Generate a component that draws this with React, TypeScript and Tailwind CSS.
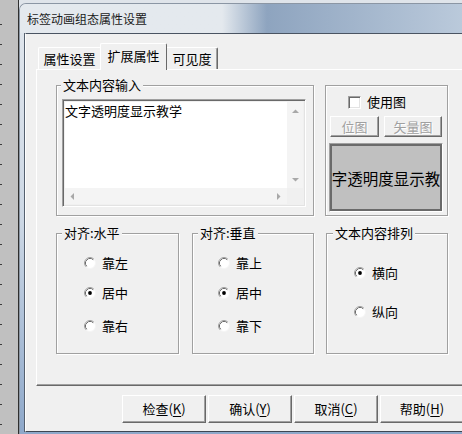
import React from 'react';

const FONT = "font-['Noto_Sans_CJK_SC','Liberation_Sans',sans-serif]";

const Radio = ({ checked = false }: { checked?: boolean }) => (
  <svg width="12" height="12" viewBox="0 0 12 12" className="shrink-0">
    <circle cx="6" cy="6" r="5.5" fill="#fff" stroke="#f4f4f4" />
    <path d="M2.11 9.89 A5.5 5.5 0 0 1 9.89 2.11" fill="none" stroke="#a0a0a0" />
    <path d="M2.82 9.18 A4.5 4.5 0 0 1 9.18 2.82" fill="none" stroke="#696969" />
    <circle cx="6" cy="6" r="3.8" fill="#fff" />
    {checked && <circle cx="6" cy="6" r="1.9" fill="#000" />}
  </svg>
);

const RadioRow = ({ label, checked, className }: { label: string; checked?: boolean; className: string }) => (
  <div className={`flex items-center gap-[6px] h-[16px] ${className}`}>
    <Radio checked={checked} />
    <span className="text-[13px] leading-[16px] text-black">{label}</span>
  </div>
);

const GroupTitle = ({ children, className = '' }: { children: React.ReactNode; className?: string }) => (
  <div className={`-mt-[9px] w-fit px-[2px] h-[16px] bg-[#f0f0f0] text-[13px] leading-[16px] text-black ${className}`}>
    {children}
  </div>
);

const Arrow = ({ dir }: { dir: 'up' | 'down' | 'left' | 'right' }) => {
  const pts = {
    up: '0,4 7,4 3.5,0.5',
    down: '0,0 7,0 3.5,3.5',
    left: '4,0 4,7 0.5,3.5',
    right: '0,0 0,7 3.5,3.5',
  }[dir];
  const horizontal = dir === 'left' || dir === 'right';
  return (
    <svg width={horizontal ? 4 : 7} height={horizontal ? 7 : 4}>
      <polygon points={pts} fill="#a8a8a8" />
    </svg>
  );
};

const DialogButton = ({ text, hot }: { text: string; hot: string }) => (
  <button className="w-[84px] h-[28px] bg-[#f0f0f0] border border-t-white border-l-white border-r-[#696969] border-b-[#696969] shadow-[inset_-1px_-1px_0_#a0a0a0] text-[13px] leading-[16px] text-black flex items-center justify-center">
    {text}(<span className="underline underline-offset-2">{hot}</span>)
  </button>
);

const SmallButton = ({ text, width }: { text: string; width: string }) => (
  <div className={`${width} h-[21px] bg-[#f0f0f0] border border-t-white border-l-white border-r-[#696969] border-b-[#696969] shadow-[inset_-1px_-1px_0_#a0a0a0] text-[13px] leading-[16px] text-[#a0a0a0] [text-shadow:1px_1px_0_#fff] flex items-center justify-center`}>
    {text}
  </div>
);

export default function App() {
  return (
    <div className={`w-[462px] h-[434px] overflow-hidden flex bg-[#dfe4ea] ${FONT}`}>
      {/* desktop strip on the left */}
      <div className="w-[19px] h-full shrink-0 bg-[#c0c0c0] border-r border-[#2f2f2f] flex flex-col pt-[24px] gap-[19px]">
        {Array.from({ length: 21 }).map((_, i) => (
          <div key={i} className="w-[2px] h-[1px] bg-[#3c3c3c]" />
        ))}
      </div>

      {/* dialog window */}
      <div className="w-[450px] shrink-0 mt-[3px] flex flex-col rounded-tl-[7px] border-l border-t border-[#8b96a4] bg-linear-to-b from-[#e2e7ed] via-[#cdd8e5] to-[#8ea8ca] overflow-hidden">
        <div className="h-[29px] shrink-0 flex items-center pl-[7px] bg-linear-to-r from-[#e4e9ee] from-45% via-[#8ea4bf] via-55% to-[#bccbdc]">
          <span className="text-[12px] leading-[16px] text-[#1a1a1a]">标签动画组态属性设置</span>
        </div>

        <div className="flex h-[399px] shrink-0">
          <div className="w-[5px] shrink-0 border-r border-[#55606e]" />
          <div className="flex-1 flex flex-col bg-[#f0f0f0] border-l border-white border-t border-t-[#4a5462] border-b border-b-[#3e4652] pt-[9px]">
            {/* tabs */}
            <div className="flex items-end h-[26px] ml-[12px]">
              <div className="w-[62px] h-[22px] border-l border-t border-white rounded-tl-[2px] flex items-center justify-center text-[13px] leading-[16px] text-black">
                属性设置
              </div>
              <div className="relative z-10 w-[67px] h-[27px] -mb-[1px] bg-[#f0f0f0] border-l border-t border-white border-r border-r-[#696969] rounded-t-[2px] flex items-start justify-center pt-[4px] text-[13px] leading-[16px] text-black">
                扩展属性
              </div>
              <div className="w-[51px] h-[22px] border-t border-white border-r border-r-[#696969] shadow-[inset_-1px_0_0_#a0a0a0] rounded-tr-[2px] flex items-center justify-center text-[13px] leading-[16px] text-black">
                可见度
              </div>
            </div>

            {/* tab page */}
            <div className="ml-[10px] w-[440px] h-[317px] shrink-0 border-l border-t border-white border-b border-b-[#696969] shadow-[inset_0_-1px_0_#a0a0a0] pt-[15px] pl-[19px]">
              <div className="flex items-start">
                <div className="w-[258px] h-[131px] border border-[#a0a0a0] shadow-[1px_1px_0_#fff,inset_1px_1px_0_#fff] flex flex-col">
                  <GroupTitle className="ml-[4px]">文本内容输入</GroupTitle>
                  <div className="mt-[6px] ml-[5px] w-[244px] h-[108px] border border-t-[#a0a0a0] border-l-[#a0a0a0] border-r-white border-b-white shadow-[inset_1px_1px_0_#696969,inset_-1px_-1px_0_#e3e3e3] p-[2px] flex flex-col">
                    <div className="flex flex-1 min-h-0">
                      <div className="flex-1 bg-white pt-[1px] text-[13px] leading-[16px] text-black">文字透明度显示教学</div>
                      <div className="w-[16px] bg-[#f4f4f4] flex flex-col items-center justify-between pt-[7px] pb-[6px]">
                        <Arrow dir="up" />
                        <Arrow dir="down" />
                      </div>
                    </div>
                    <div className="flex h-[16px]">
                      <div className="flex-1 bg-[#f4f4f4] flex items-center justify-between pl-[5px] pr-[6px]">
                        <Arrow dir="left" />
                        <Arrow dir="right" />
                      </div>
                      <div className="w-[16px] bg-[#f0f0f0]" />
                    </div>
                  </div>
                </div>

                <div className="ml-[11px] w-[123px] h-[131px] border border-[#a0a0a0] shadow-[1px_1px_0_#fff,inset_1px_1px_0_#fff] flex flex-col">
                  <div className="mt-[8px] ml-[22px] h-[16px] flex items-center gap-[6px]">
                    <div className="w-[13px] h-[13px] bg-white border border-t-[#a0a0a0] border-l-[#a0a0a0] border-r-white border-b-white shadow-[inset_1px_1px_0_#696969,inset_-1px_-1px_0_#e3e3e3]" />
                    <span className="text-[13px] leading-[16px] text-black">使用图</span>
                  </div>
                  <div className="mt-[6px] ml-[4px] flex gap-[5px]">
                    <SmallButton text="位图" width="w-[49px]" />
                    <SmallButton text="矢量图" width="w-[58px]" />
                  </div>
                  <div className="mt-[6px] ml-[3px] w-[114px] h-[69px] border border-t-[#a0a0a0] border-l-[#a0a0a0] border-r-white border-b-white">
                    <div className="w-full h-full border-2 border-[#6a6a6a] bg-[#c0c0c0] flex items-center justify-center overflow-hidden whitespace-nowrap text-[15.5px] leading-[20px] text-black">
                      字透明度显示教
                    </div>
                  </div>
                </div>
              </div>

              <div className="flex items-start mt-[17px]">
                <div className="w-[123px] h-[121px] border border-[#a0a0a0] shadow-[1px_1px_0_#fff,inset_1px_1px_0_#fff] flex flex-col">
                  <GroupTitle className="ml-[5px]">对齐:水平</GroupTitle>
                  <RadioRow label="靠左" className="ml-[27px] mt-[14px]" />
                  <RadioRow label="居中" checked className="ml-[27px] mt-[14px]" />
                  <RadioRow label="靠右" className="ml-[27px] mt-[17px]" />
                </div>
                <div className="ml-[13px] w-[122px] h-[121px] border border-[#a0a0a0] shadow-[1px_1px_0_#fff,inset_1px_1px_0_#fff] flex flex-col">
                  <GroupTitle className="ml-[5px]">对齐:垂直</GroupTitle>
                  <RadioRow label="靠上" className="ml-[25px] mt-[14px]" />
                  <RadioRow label="居中" checked className="ml-[25px] mt-[14px]" />
                  <RadioRow label="靠下" className="ml-[25px] mt-[17px]" />
                </div>
                <div className="ml-[12px] w-[122px] h-[121px] border border-[#a0a0a0] shadow-[1px_1px_0_#fff,inset_1px_1px_0_#fff] flex flex-col">
                  <GroupTitle className="ml-[6px]">文本内容排列</GroupTitle>
                  <RadioRow label="横向" checked className="ml-[27px] mt-[24px]" />
                  <RadioRow label="纵向" className="ml-[27px] mt-[23px]" />
                </div>
              </div>
            </div>

            {/* dialog buttons */}
            <div className="mt-[9px] ml-[96px] flex gap-[2px]">
              <DialogButton text="检查" hot="K" />
              <DialogButton text="确认" hot="Y" />
              <DialogButton text="取消" hot="C" />
              <DialogButton text="帮助" hot="H" />
            </div>
          </div>
        </div>
      </div>
    </div>
  );
}
